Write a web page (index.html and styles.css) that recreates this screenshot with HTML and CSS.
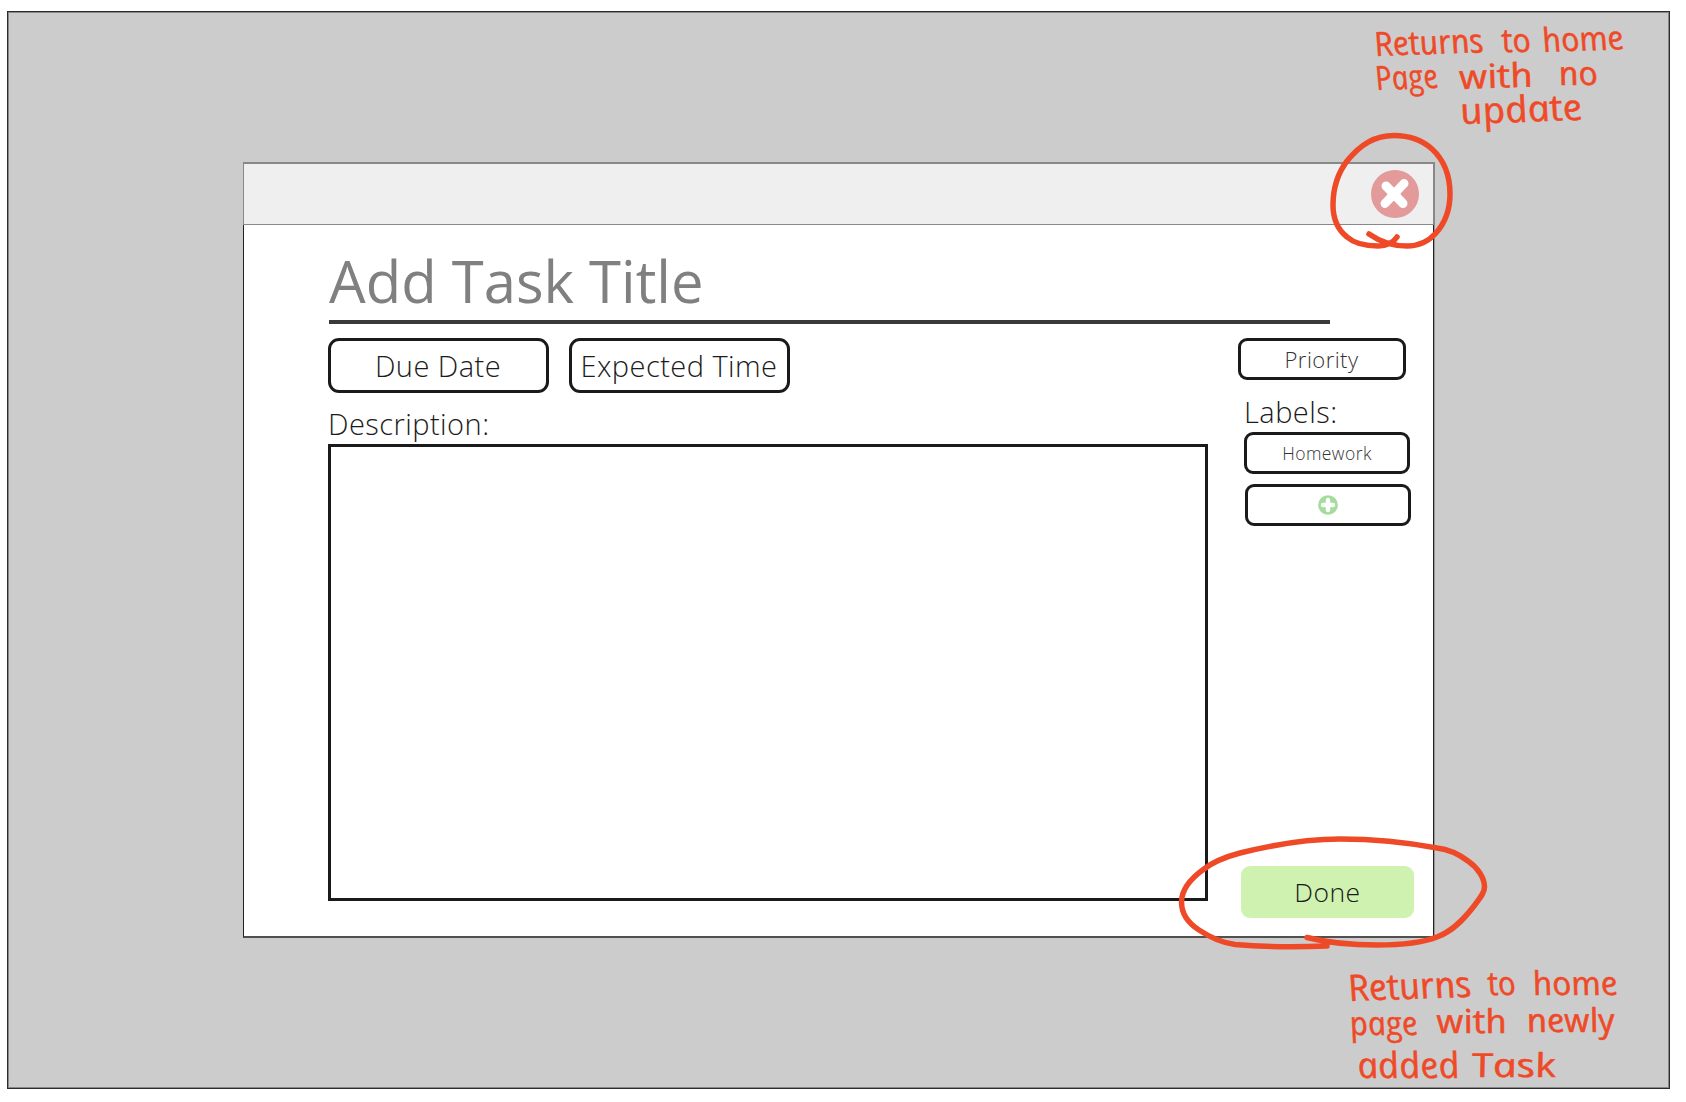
FILE: index.html
```html
<!DOCTYPE html>
<html lang="en">
<head>
<meta charset="utf-8">
<title>Add Task</title>
<link rel="stylesheet" href="styles.css">
</head>
<body>
<main class="screen">
  <section class="dialog">
    <header class="dialog-bar">
      <svg class="close" viewBox="0 0 48 48" role="img" aria-label="Close">
        <circle cx="24" cy="24" r="24" fill="#e29a9a"/>
        <path d="M15 16L32 33.500M33 13.500L14 33.500" stroke="#fff" stroke-width="9" stroke-linecap="round"/>
        <circle cx="23" cy="24.500" r="6.500" fill="#fff"/>
      </svg>
    </header>
    <div class="dialog-body">
      <h1 class="title">Add Task Title</h1>
      <div class="columns">
        <div class="main-column">
          <div class="chips">
            <div class="box chip">Due Date</div>
            <div class="box chip">Expected Time</div>
          </div>
          <div class="field-name">Description:</div>
          <div class="description"></div>
        </div>
        <aside class="side-column">
          <div class="box priority">Priority</div>
          <div class="field-name labels-name">Labels:</div>
          <div class="box label">Homework</div>
          <div class="box label add-label">
            <svg class="plus" viewBox="0 0 20 20" role="img" aria-label="Add label">
              <circle cx="10" cy="10" r="9.8" fill="#a3dc9b"/>
              <path d="M10 5V15M5 10H15" stroke="#fff" stroke-width="4.4" stroke-linecap="round"/>
            </svg>
          </div>
          <div class="done">Done</div>
        </aside>
      </div>
    </div>
  </section>
</main>
<svg class="notes" viewBox="0 0 1686 1102">
  <g class="ring">
    <path d="M1397 237C1393 243 1386 246 1378 246C1366 246 1355 244 1347 237C1337 229 1333 218 1333 205C1333 187 1338 173 1347 161C1361 144 1375 135.500 1394 135.500C1410 135.500 1422 140 1432 149C1445 161 1450 176 1450 194C1450 211 1444 224 1436 233C1428 242 1419 246 1407 246C1390 246 1379 241 1369 234"/>
    <path d="M1307 937.500C1329 943 1350 945 1377 945C1401 945 1422 943 1437 937C1453 931 1464 919 1474 906C1480 898 1484.500 893 1484.500 887C1484.500 878 1478 868 1468 861C1456 852 1446 849 1437 848C1405 842 1373 839 1340 839C1305 839 1272 845 1240 853C1225 857 1213 862 1204 869C1190 879 1181.500 890 1181.500 902C1181.500 913 1188 923 1199 930C1211 938 1223 943 1235 944.500C1264 947 1300 947 1327 946"/>
  </g>
  <g class="handwriting">
    <g transform="translate(1377 56) skewX(14) rotate(-2)"><text textLength="110" lengthAdjust="spacingAndGlyphs">Returns</text></g>
    <g transform="translate(1504 52) skewX(14)"><text textLength="29" lengthAdjust="spacingAndGlyphs">to</text></g>
    <g transform="translate(1545 52) skewX(14) rotate(-2)"><text textLength="82" lengthAdjust="spacingAndGlyphs">home</text></g>
    <g transform="translate(1378 90) skewX(14) rotate(-2)"><text textLength="63" lengthAdjust="spacingAndGlyphs">Page</text></g>
    <g transform="translate(1462 89) skewX(14) rotate(-2)"><text textLength="74" lengthAdjust="spacingAndGlyphs">with</text></g>
    <g transform="translate(1561 85) skewX(14)"><text textLength="39" lengthAdjust="spacingAndGlyphs">no</text></g>
    <g transform="translate(1463 124) skewX(14) rotate(-2)"><text class="large" textLength="123" lengthAdjust="spacingAndGlyphs">update</text></g>
    <g transform="translate(1351 1001) skewX(14) rotate(-2)"><text class="large" textLength="124" lengthAdjust="spacingAndGlyphs">Returns</text></g>
    <g transform="translate(1490 995) skewX(14)"><text textLength="28" lengthAdjust="spacingAndGlyphs">to</text></g>
    <g transform="translate(1535 995) skewX(14)"><text textLength="85" lengthAdjust="spacingAndGlyphs">home</text></g>
    <g transform="translate(1352 1035) skewX(14)"><text textLength="68" lengthAdjust="spacingAndGlyphs">page</text></g>
    <g transform="translate(1439 1033) skewX(14)"><text textLength="70" lengthAdjust="spacingAndGlyphs">with</text></g>
    <g transform="translate(1529 1032) skewX(14)"><text textLength="88" lengthAdjust="spacingAndGlyphs">newly</text></g>
    <g transform="translate(1360 1078) skewX(14)"><text class="large" textLength="102" lengthAdjust="spacingAndGlyphs">added</text></g>
    <g transform="translate(1474 1077) skewX(14)"><text textLength="84" lengthAdjust="spacingAndGlyphs">Task</text></g>
  </g>
</svg>
</body>
</html>
```
FILE: styles.css
```css
* { box-sizing: border-box; }

body {
  margin: 0;
  padding: 11px 16px 13px 7px;
  height: 1102px;
  overflow: hidden;
  background: #fff;
  color: #1b1b1b;
  font-family: "Open Sans", "Noto Sans", sans-serif;
  font-weight: 350;
  letter-spacing: 0.45px;
}

.screen {
  height: 1078px;
  padding: 150px 235px 0 235px;
  border: 1px solid #2c2c2c;
  box-shadow: inset 0 0 0 1px #888;
  background: #ccc;
}

.dialog {
  display: flex;
  flex-direction: column;
  width: 1192px;
  height: 776px;
  background: #fff;
}

.dialog-bar {
  display: flex;
  flex: none;
  align-items: center;
  justify-content: flex-end;
  height: 63px;
  padding-right: 14px;
  border: solid #888;
  border-width: 2px 2px 1px 1px;
  background: #efefef;
}

.close { width: 48px; height: 48px; }

.dialog-body {
  flex: 1;
  margin-right: 1px;
  padding: 24px 0 0 85px;
  border: solid #222;
  border-width: 0 1px 2px 1px;
  border-bottom-color: #505050;
  box-shadow: 1px 0 #999;
}

.title {
  width: 1001px;
  height: 75px;
  margin: 0 0 14px;
  border-bottom: 4px solid #3a3a3a;
  color: #808080;
  font-size: 58px;
  font-weight: 400;
  letter-spacing: 0;
  line-height: 64px;
}

.columns { display: flex; margin-left: -1px; }

.main-column { width: 880px; }

.chips { display: flex; gap: 20px; }

.box {
  display: flex;
  align-items: center;
  justify-content: center;
  border: 3px solid #1a1a1a;
  border-radius: 9px;
  white-space: nowrap;
}

.chip {
  width: 221px;
  height: 55px;
  padding-right: 1px;
  border-radius: 11px;
  font-size: 29px;
}

.field-name {
  height: 51px;
  padding-top: 11px;
  font-size: 29px;
  line-height: 40px;
}

.description {
  height: 457px;
  border: 3px solid #1a1a1a;
}

.side-column {
  display: flex;
  flex-direction: column;
  align-items: flex-start;
  padding-left: 36px;
}

.priority {
  width: 168px;
  height: 42px;
  margin-left: -6px;
  padding-right: 1px;
  color: #333;
  font-size: 22px;
}

.labels-name { height: 52px; padding-top: 12px; }

.label {
  width: 166px;
  height: 42px;
  padding-bottom: 1px;
  color: #333;
  font-size: 17.500px;
}

.add-label { margin: 10px 0 0 1px; }

.plus { width: 20px; height: 20px; }

.done {
  display: flex;
  align-items: center;
  justify-content: center;
  width: 173px;
  height: 52px;
  margin: auto 0 -17px -3px;
  border-radius: 9px;
  background: #cff2b0;
  font-size: 26.500px;
}

.notes {
  position: absolute;
  top: 0;
  left: 0;
  width: 1686px;
  height: 1102px;
  pointer-events: none;
}

.ring {
  fill: none;
  stroke: #ef4a28;
  stroke-width: 5.500;
  stroke-linecap: round;
  stroke-linejoin: round;
}

.handwriting {
  fill: #ef4a28;
  stroke: #ef4a28;
  stroke-width: 0.500;
  stroke-linejoin: round;
  font-size: 33px;
  font-style: italic;
  font-weight: 500;
  letter-spacing: 0;
}

.large { font-size: 36px; }
```
